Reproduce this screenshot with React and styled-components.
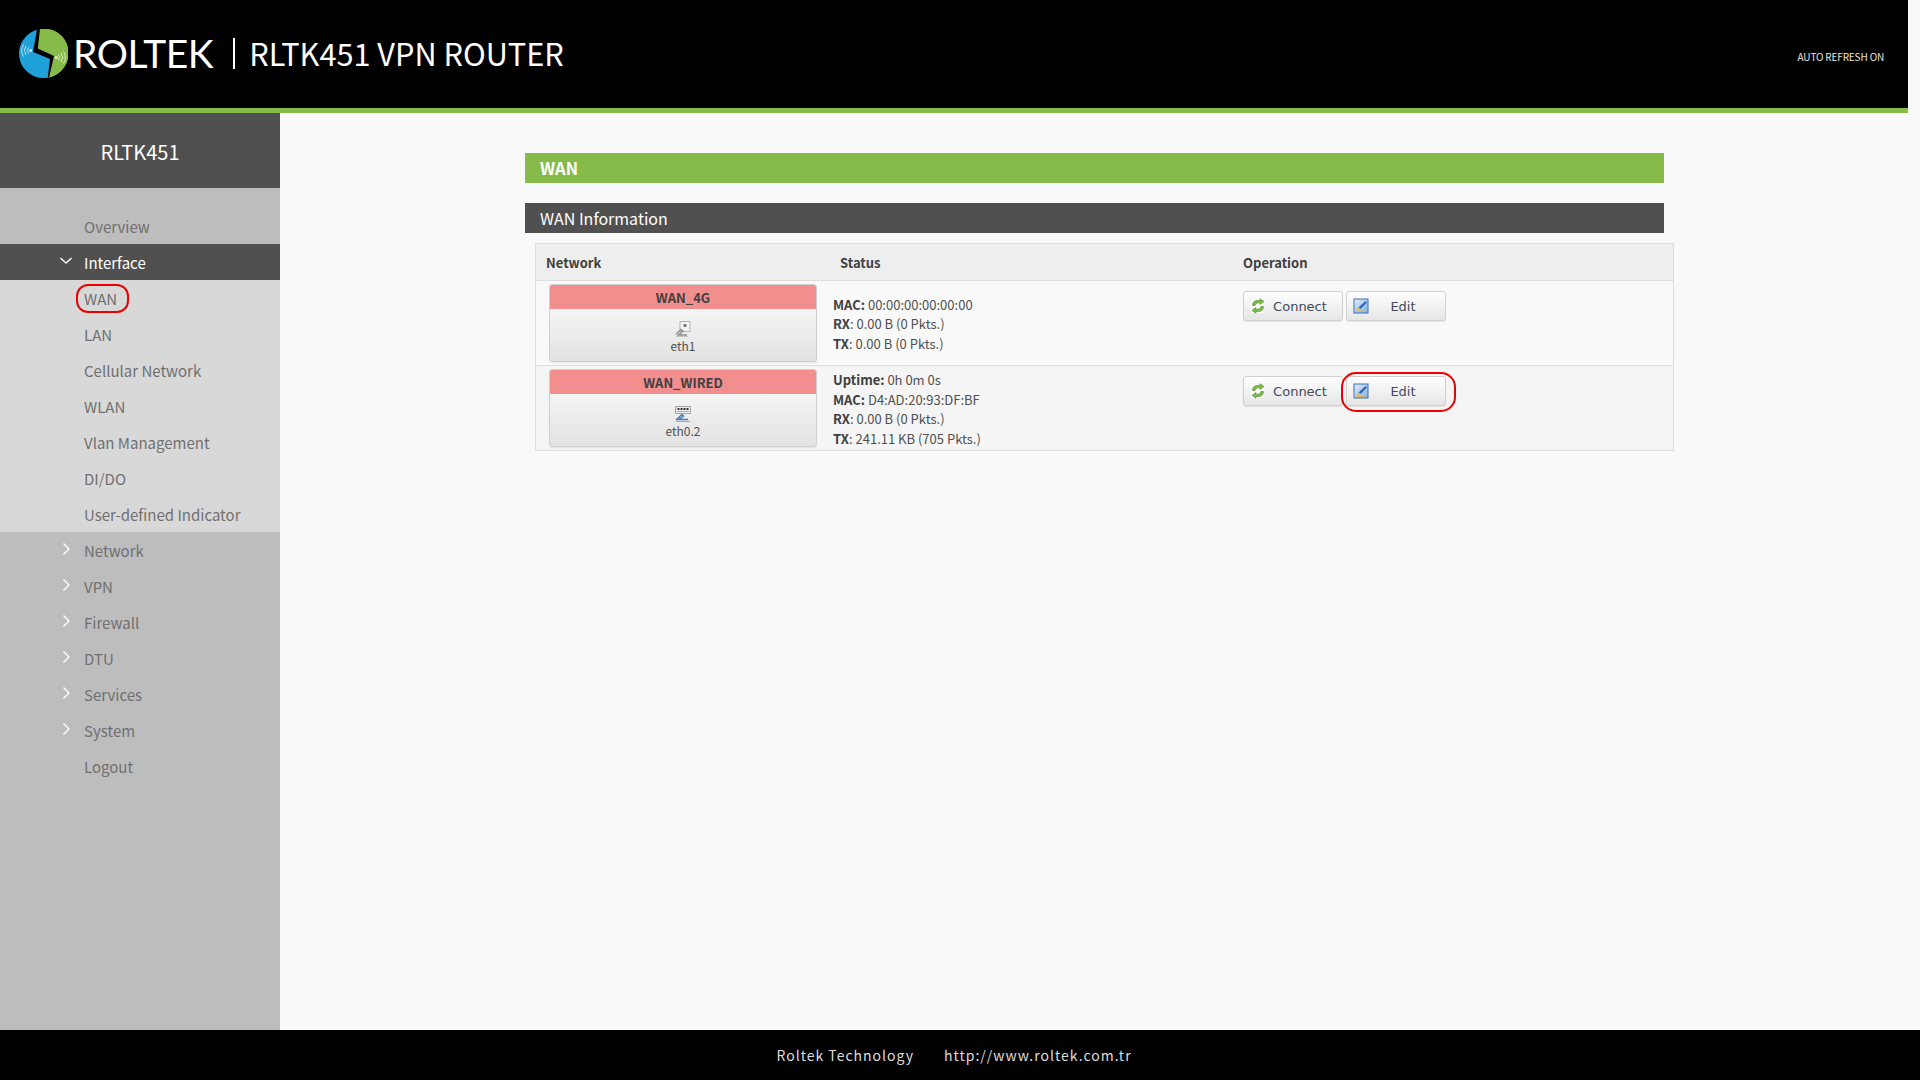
import React from "react";
import styled, { createGlobalStyle } from "styled-components";

const GlobalStyle = createGlobalStyle`
  html, body {
    margin: 0;
    padding: 0;
    background: #f9f9f9;
  }
  body {
    font-family: "Noto Sans CJK SC", "Noto Sans", sans-serif;
    color: #404040;
  }
`;

const Page = styled.div`
  height: 1080px;
  display: flex;
  flex-direction: column;
  overflow: hidden;
`;

const Header = styled.header`
  width: 1908px;
  height: 108px;
  flex: none;
  background: #000;
  border-bottom: 5px solid #86bb4a;
  display: flex;
  align-items: center;
`;

const LogoBox = styled.div`
  display: flex;
  align-items: center;
  margin-left: 19px;
  margin-top: -1px;
`;

const LogoName = styled.span`
  font-family: "Lato", sans-serif;
  font-size: 39px;
  line-height: 1;
  color: #fff;
  margin-left: 5px;
  letter-spacing: -0.5px;
`;

const Divider = styled.span`
  width: 2px;
  height: 31px;
  background: #fff;
  margin-left: 20px;
`;

const ProductName = styled.span`
  font-size: 30.7px;
  line-height: 1;
  color: #fff;
  margin-left: 14px;
`;

const AutoRefresh = styled.span`
  margin-left: auto;
  margin-right: 24px;
  margin-top: 5px;
  font-size: 10px;
  letter-spacing: -0.15px;
  color: #e8e4dc;
`;

const Middle = styled.div`
  flex: 1;
  display: flex;
  min-height: 0;
`;

const Sidebar = styled.nav`
  width: 280px;
  flex: none;
  background: #bdbdbd;
`;

const SideTitle = styled.div`
  height: 73px;
  padding-top: 2px;
  background: #505050;
  color: #fff;
  font-size: 20px;
  display: flex;
  align-items: center;
  justify-content: center;
  margin-bottom: 20px;
`;

const MenuRow = styled.div`
  height: 36px;
  display: flex;
  align-items: center;
  padding-left: 84px;
  position: relative;
  font-size: 15px;
  color: ${(p) => (p.$active ? "#fff" : "#707070")};
  background: ${(p) => (p.$active ? "#505050" : "transparent")};
`;

const SubMenu = styled.div`
  background: #d8d8d8;
`;

const Arrow = styled.svg`
  position: absolute;
  left: 60px;
  top: 10px;
  width: 12px;
  height: 14px;
  fill: none;
  stroke: #fff;
  stroke-width: 1.4;
`;

const Ringed = styled.span`
  position: relative;
`;

const MenuRing = styled.span`
  position: absolute;
  left: -8px;
  right: -12px;
  top: -4px;
  bottom: -4px;
  border: 2px solid #ee0000;
  border-radius: 12px;
`;

const Main = styled.main`
  flex: 1;
  padding: 40px 0 0 245px;
`;

const PageTitle = styled.h2`
  width: 1139px;
  height: 30px;
  margin: 0 0 20px;
  padding-left: 15px;
  box-sizing: border-box;
  background: #86bb4a;
  color: #fff;
  font-size: 16.5px;
  font-weight: 700;
  line-height: 31px;
`;

const SectionTitle = styled.h3`
  width: 1139px;
  height: 30px;
  margin: 0 0 10px;
  padding-left: 15px;
  box-sizing: border-box;
  background: #505050;
  color: #fff;
  font-size: 16px;
  font-weight: 400;
  line-height: 30px;
`;

const Table = styled.div`
  width: 1139px;
  margin-left: 10px;
  box-sizing: border-box;
  border: 1px solid #dddddd;
`;

const HeadRow = styled.div`
  height: 36px;
  display: grid;
  grid-template-columns: 304px 403px 1fr;
  align-items: center;
  background: #eeeeee;
  border-bottom: 1px solid #dddddd;
  font-size: 13px;
  font-weight: 700;
  color: #404040;
  & > span:first-child {
    padding-left: 10px;
  }
`;

const Row = styled.div`
  height: 84px;
  display: grid;
  grid-template-columns: 297px 410px 1fr;
  background: ${(p) => (p.$alt ? "#f5f5f5" : "#f9f9f9")};
  & + & {
    border-top: 1px solid #dddddd;
  }
`;

const NetCell = styled.div`
  padding: 3px 0 0 13px;
`;

const NetCard = styled.div`
  width: 268px;
  height: 78px;
  box-sizing: border-box;
  border: 1px solid #d0d0d0;
  border-radius: 3px;
  overflow: hidden;
  background: linear-gradient(#fdfdfd, #e2e2e2);
  box-shadow: 0 1px 1px rgba(0, 0, 0, 0.08);
  text-align: center;
`;

const NetName = styled.div`
  height: 24px;
  background: #f28e8e;
  font-size: 13px;
  font-weight: 700;
  line-height: 26px;
  color: #404040;
`;

const NetIcon = styled.svg`
  display: block;
  margin: 12px auto 0;
  width: 16px;
  height: 16px;
`;

const NetLabel = styled.div`
  font-size: 12px;
  line-height: 18px;
  color: #505050;
`;

const StatusCell = styled.div`
  display: flex;
  flex-direction: column;
  justify-content: center;
  padding-top: 2px;
  font-size: 13px;
  line-height: 19.5px;
  color: #505050;
  & b {
    font-weight: 700;
    color: #404040;
  }
`;

const OpCell = styled.div`
  display: flex;
  align-items: flex-start;
  gap: 3px;
  padding-top: 10px;
`;

const OpButton = styled.div`
  position: relative;
  width: 100px;
  height: 30px;
  box-sizing: border-box;
  border: 1px solid #d0d0d0;
  border-radius: 3px;
  background: linear-gradient(#fefefe, #e6e6e6);
  box-shadow: 0 1px 1px rgba(0, 0, 0, 0.08);
  display: flex;
  align-items: center;
  font-family: "DejaVu Sans", sans-serif;
  font-size: 13px;
  color: #404a5a;
`;

const OpIcon = styled.svg`
  width: 16px;
  height: 16px;
  margin-left: 6px;
  flex: none;
`;

const OpText = styled.span`
  flex: 1;
  text-align: center;
  padding-right: ${(p) => p.$pad}px;
`;

const ButtonRing = styled.span`
  position: absolute;
  left: -6px;
  right: -11px;
  top: -5px;
  bottom: -7px;
  border: 2px solid #ee0000;
  border-radius: 15px;
`;

const Footer = styled.footer`
  height: 50px;
  flex: none;
  padding-right: 12px;
  background: #000;
  color: #dddddd;
  font-size: 14px;
  letter-spacing: 1px;
  display: flex;
  align-items: center;
  justify-content: center;
  gap: 30px;
`;

const Logo = () => (
  <svg width="49" height="49" viewBox="0 0 49 49">
    <circle cx="24.5" cy="24.5" r="24.5" fill="#1fa0d8" />
    <path d="M20 0A24.5 24.5 0 0 1 30 48.4L33 28L16 22Z" fill="#86bb4a" />
    <path
      d="M18 .5L21 0L18.8 19.6L35 27L30 48.4L28.8 48.6L31 30L14 23Z"
      fill="#000"
    />
    <g fill="none" stroke="#fff" strokeWidth="0.7">
      <path d="M9.5 18.5Q7.5 21.5 9.5 24.5M7 17Q4 21.5 7 26M4.5 15.5Q.8 21.5 4.5 27.5" />
      <path d="M39.5 25.5Q41.5 28.5 39.5 31.5M42 24Q45 28.5 42 33M44.5 22.5Q48.2 28.5 44.5 34.5" />
    </g>
    <rect x="10.5" y="20.5" width="2.5" height="2" fill="#fff" />
    <rect x="36" y="27.5" width="2.5" height="2" fill="#fff" />
  </svg>
);

const Chevron = ({ open }) => (
  <Arrow viewBox="0 0 12 14">
    <polyline points={open ? "0.5,4 6,9 11.5,4" : "3.5,1.5 9,7 3.5,12.5"} />
  </Arrow>
);

const PortIcon = () => (
  <NetIcon viewBox="0 0 16 16">
    <rect x="5" y="0.5" width="10" height="10" fill="#f4f4f4" stroke="#b0b0b0" />
    <rect x="8.5" y="3" width="3" height="3" fill="#777" />
    <path d="M1 13.5L6 8.5L8 10L3.5 14H12" fill="none" stroke="#8e8e8e" strokeWidth="1.4" />
    <path d="M1 15.5H13" stroke="#c4c4c4" />
  </NetIcon>
);

const SwitchIcon = () => (
  <NetIcon viewBox="0 0 16 16">
    <rect x="0.5" y="0.5" width="15" height="7" fill="#eee" stroke="#a4a4a4" />
    <path d="M2.5 2h2v2h-2zM5.5 2h2v2h-2zM8.5 2h2v2h-2zM11.5 2h2v2h-2z" fill="#333" />
    <path d="M2 5.5h12" stroke="#c8b040" />
    <path d="M1 14L7 8.5L8.5 10L4 13.5H13" fill="none" stroke="#4a78b8" strokeWidth="1.5" />
    <path d="M1 15.5H15" stroke="#9ab" />
  </NetIcon>
);

const RefreshIcon = () => (
  <OpIcon viewBox="0 0 16 16">
    <rect x="1" y="1" width="13" height="14" fill="#fafafa" />
    <path d="M2.5 7.5Q2.5 2.5 8 2.5H10V0.8L14 3.6L10 6.4V4.8H8Q5.5 4.8 5 7.5Z" fill="#7dbc48" stroke="#4c8a24" strokeWidth="0.6" />
    <path d="M13.5 8.5Q13.5 13.5 8 13.5H6V15.2L2 12.4L6 9.6V11.2H8Q10.5 11.2 11 8.5Z" fill="#7dbc48" stroke="#4c8a24" strokeWidth="0.6" />
  </OpIcon>
);

const EditIcon = () => (
  <OpIcon viewBox="0 0 16 16">
    <defs>
      <linearGradient id="editFill" x1="0" y1="0" x2="1" y2="1">
        <stop offset="0" stopColor="#e4effb" />
        <stop offset="1" stopColor="#7fb0e8" />
      </linearGradient>
    </defs>
    <rect x="1" y="1" width="14" height="14" fill="url(#editFill)" stroke="#3a70b8" />
    <path d="M12.5 3L14 4.5L7.5 11L5.5 9.5Z" fill="#2f68b4" />
    <path d="M5.5 9.5L7.5 11L3.5 12.5Z" fill="#f2b420" />
    <path d="M3 13.2H13" stroke="#f2b420" />
  </OpIcon>
);

const Buttons = ({ ringed }) => (
  <OpCell>
    <OpButton>
      <RefreshIcon />
      <OpText $pad={8}>Connect</OpText>
    </OpButton>
    <OpButton>
      <EditIcon />
      <OpText $pad={8}>Edit</OpText>
      {ringed && <ButtonRing />}
    </OpButton>
  </OpCell>
);

function App() {
  return (
    <Page>
      <GlobalStyle />
      <Header>
        <LogoBox>
          <Logo />
          <LogoName>ROLTEK</LogoName>
          <Divider />
          <ProductName>RLTK451 VPN ROUTER</ProductName>
        </LogoBox>
        <AutoRefresh>AUTO REFRESH ON</AutoRefresh>
      </Header>
      <Middle>
        <Sidebar>
          <SideTitle>RLTK451</SideTitle>
          <MenuRow>Overview</MenuRow>
          <MenuRow $active>
            <Chevron open />
            Interface
          </MenuRow>
          <SubMenu>
            <MenuRow>
              <Ringed>
                WAN
                <MenuRing />
              </Ringed>
            </MenuRow>
            <MenuRow>LAN</MenuRow>
            <MenuRow>Cellular Network</MenuRow>
            <MenuRow>WLAN</MenuRow>
            <MenuRow>Vlan Management</MenuRow>
            <MenuRow>DI/DO</MenuRow>
            <MenuRow>User-defined Indicator</MenuRow>
          </SubMenu>
          {["Network", "VPN", "Firewall", "DTU", "Services", "System"].map((name) => (
            <MenuRow key={name}>
              <Chevron />
              {name}
            </MenuRow>
          ))}
          <MenuRow>Logout</MenuRow>
        </Sidebar>
        <Main>
          <PageTitle>WAN</PageTitle>
          <SectionTitle>WAN Information</SectionTitle>
          <Table>
            <HeadRow>
              <span>Network</span>
              <span>Status</span>
              <span>Operation</span>
            </HeadRow>
            <Row>
              <NetCell>
                <NetCard>
                  <NetName>WAN_4G</NetName>
                  <PortIcon />
                  <NetLabel>eth1</NetLabel>
                </NetCard>
              </NetCell>
              <StatusCell>
                <div><b>MAC:</b> 00:00:00:00:00:00</div>
                <div><b>RX</b>: 0.00 B (0 Pkts.)</div>
                <div><b>TX</b>: 0.00 B (0 Pkts.)</div>
              </StatusCell>
              <Buttons />
            </Row>
            <Row $alt>
              <NetCell>
                <NetCard>
                  <NetName>WAN_WIRED</NetName>
                  <SwitchIcon />
                  <NetLabel>eth0.2</NetLabel>
                </NetCard>
              </NetCell>
              <StatusCell>
                <div><b>Uptime:</b> 0h 0m 0s</div>
                <div><b>MAC:</b> D4:AD:20:93:DF:BF</div>
                <div><b>RX</b>: 0.00 B (0 Pkts.)</div>
                <div><b>TX</b>: 241.11 KB (705 Pkts.)</div>
              </StatusCell>
              <Buttons ringed />
            </Row>
          </Table>
        </Main>
      </Middle>
      <Footer>
        <span>Roltek Technology</span>
        <span>http://www.roltek.com.tr</span>
      </Footer>
    </Page>
  );
}

export default App;
